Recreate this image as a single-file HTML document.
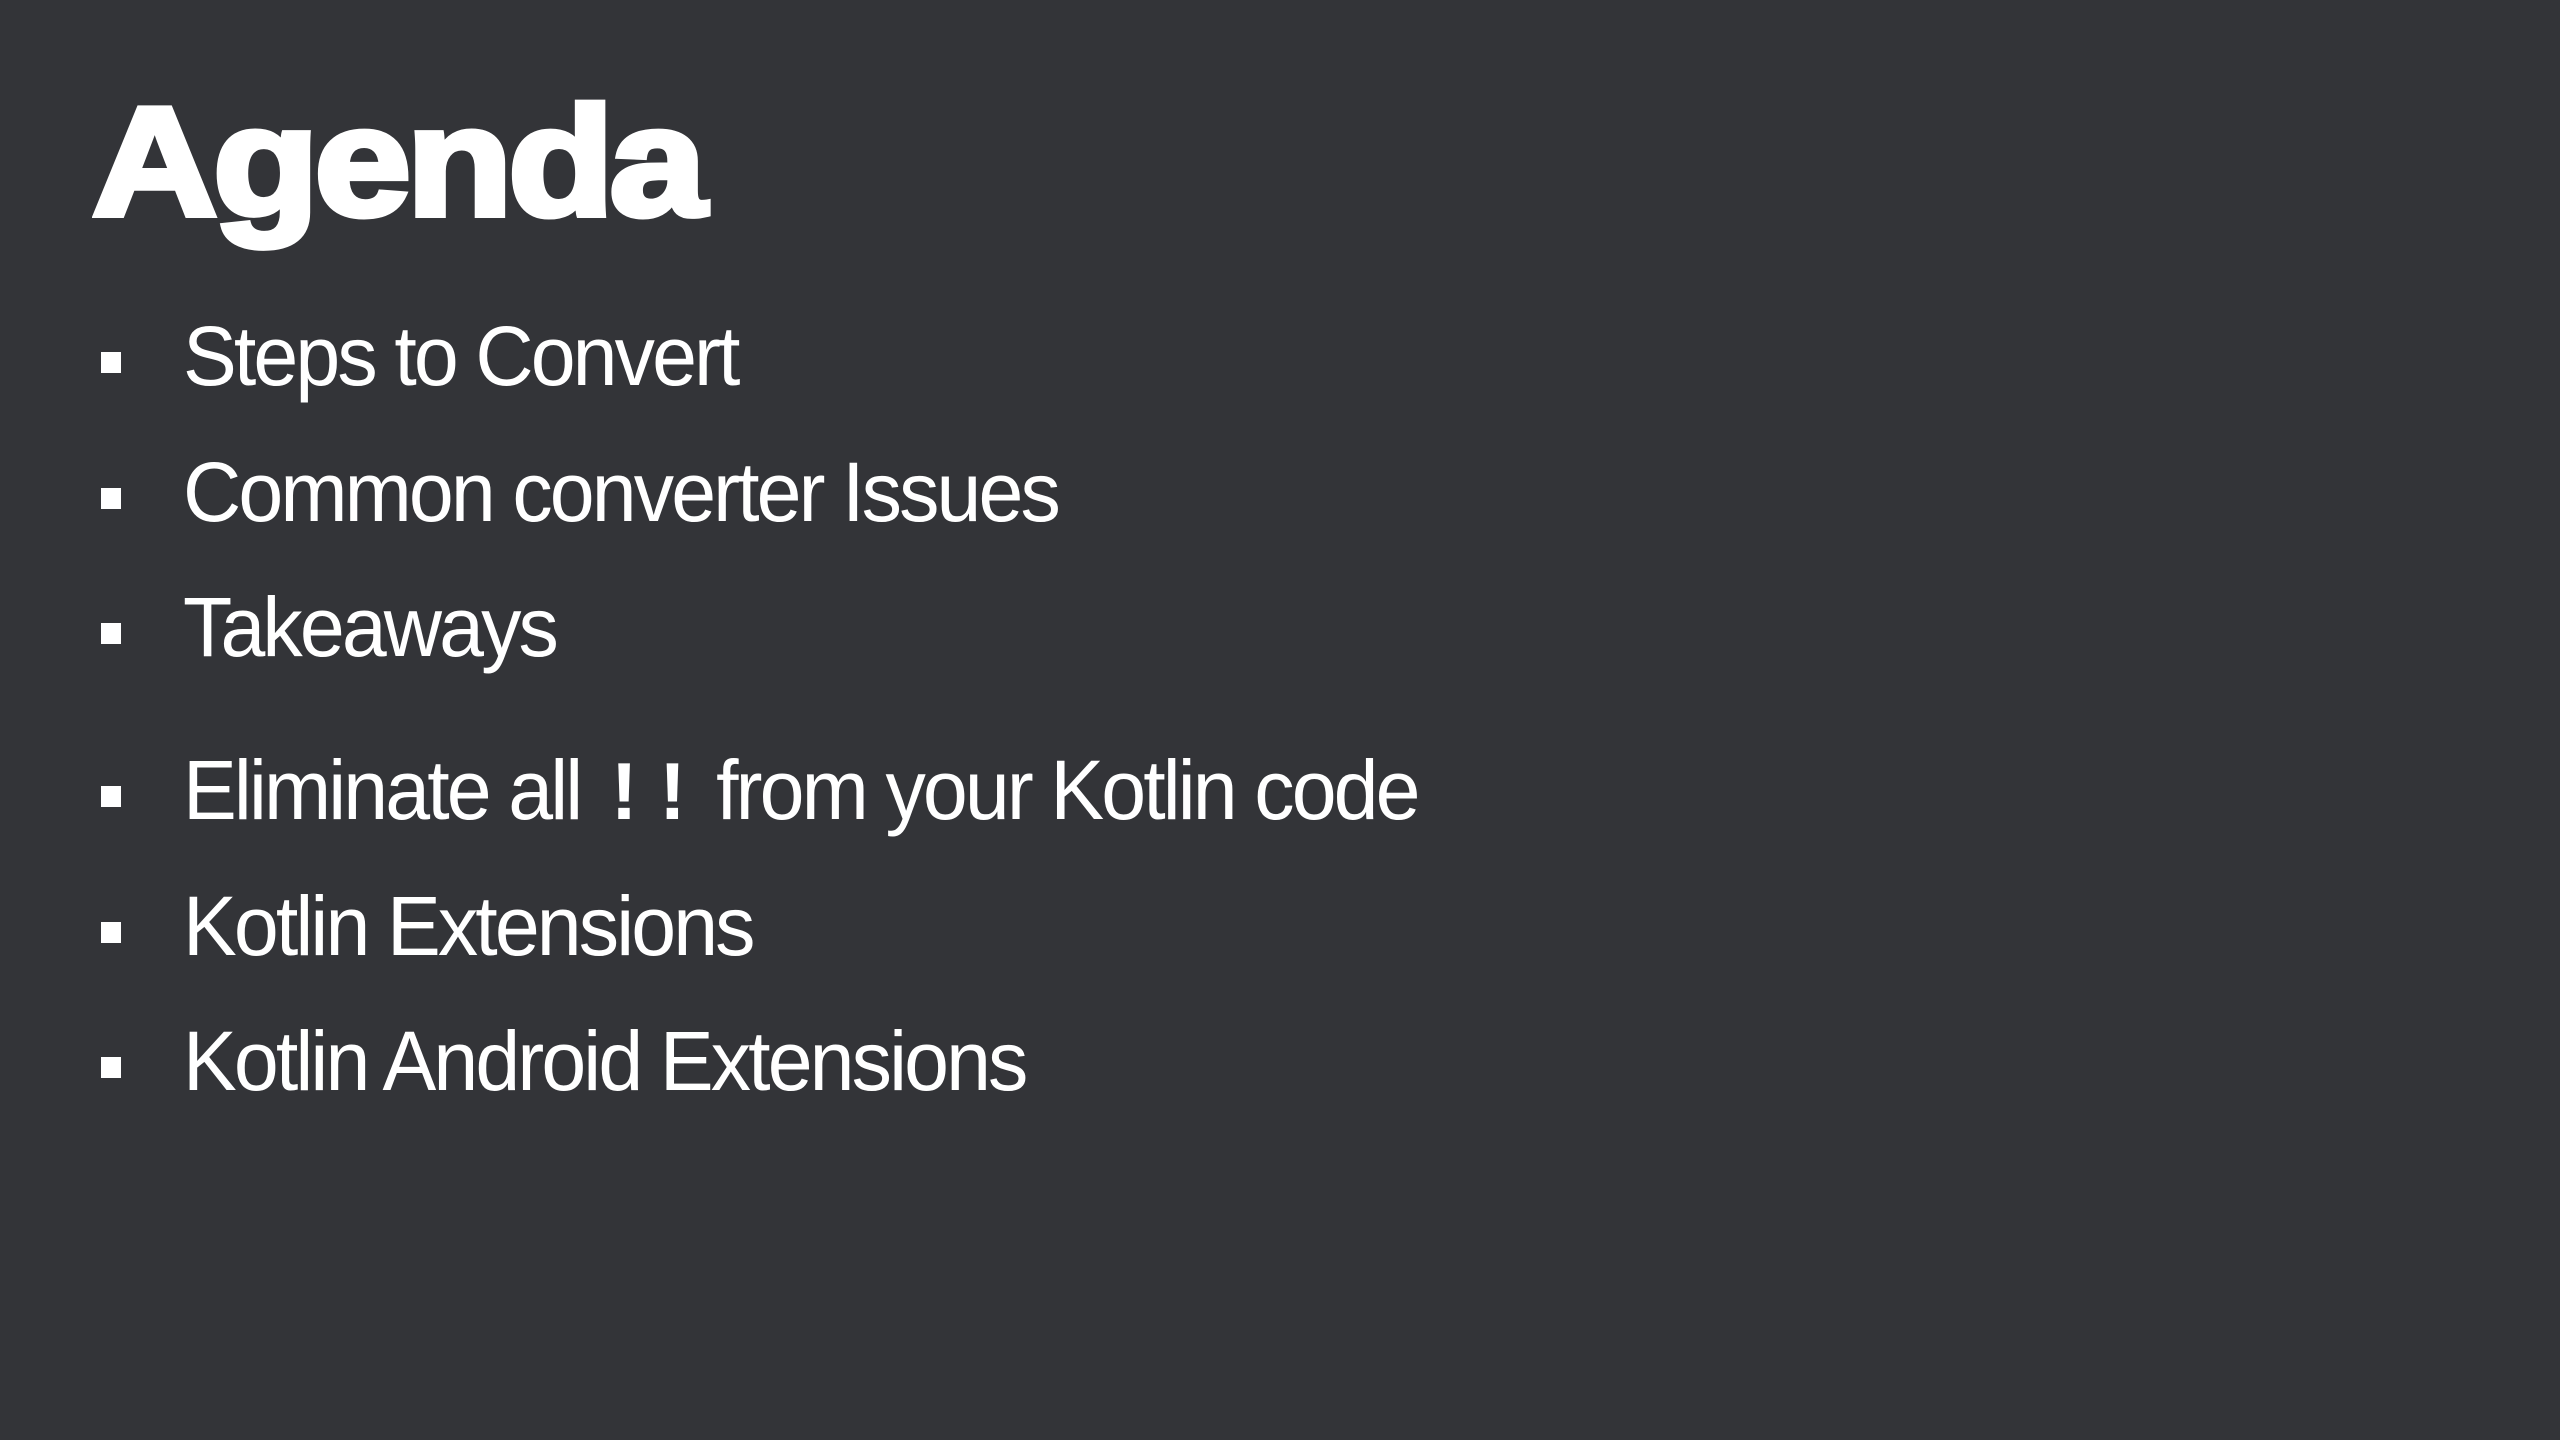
<!DOCTYPE html>
<html><head><meta charset="utf-8"><style>
html,body{margin:0;padding:0}
body{width:2560px;height:1440px;background:#333438;position:relative;overflow:hidden;font-family:"Liberation Sans",sans-serif;color:#fff}
h1{position:absolute;left:92px;margin:0;font-size:155px;font-weight:bold;line-height:1;letter-spacing:-4px;top:84px;-webkit-text-stroke:6px #fff;transform:scaleX(1.12);transform-origin:left}
.i{position:absolute;left:183px;font-size:84px;line-height:1;letter-spacing:-3px;white-space:nowrap;transform:scaleX(0.96);transform-origin:left}
.b{position:absolute;left:101px;width:20px;height:21px;background:#fff}
.m{font-family:"Liberation Mono",monospace;font-weight:bold;letter-spacing:0}
</style></head><body>
<h1>Agenda</h1>
<div class="b" style="top:352px"></div><div class="i" style="top:314px">Steps to Convert</div>
<div class="b" style="top:488px"></div><div class="i" style="top:450px">Common converter Issues</div>
<div class="b" style="top:623px"></div><div class="i" style="top:585px">Takeaways</div>
<div class="b" style="top:786px"></div><div class="i" style="top:748px">Eliminate all <span class="m">!!</span> from your Kotlin code</div>
<div class="b" style="top:922px"></div><div class="i" style="top:884px">Kotlin Extensions</div>
<div class="b" style="top:1057px"></div><div class="i" style="top:1019px">Kotlin Android Extensions</div>
</body></html>
